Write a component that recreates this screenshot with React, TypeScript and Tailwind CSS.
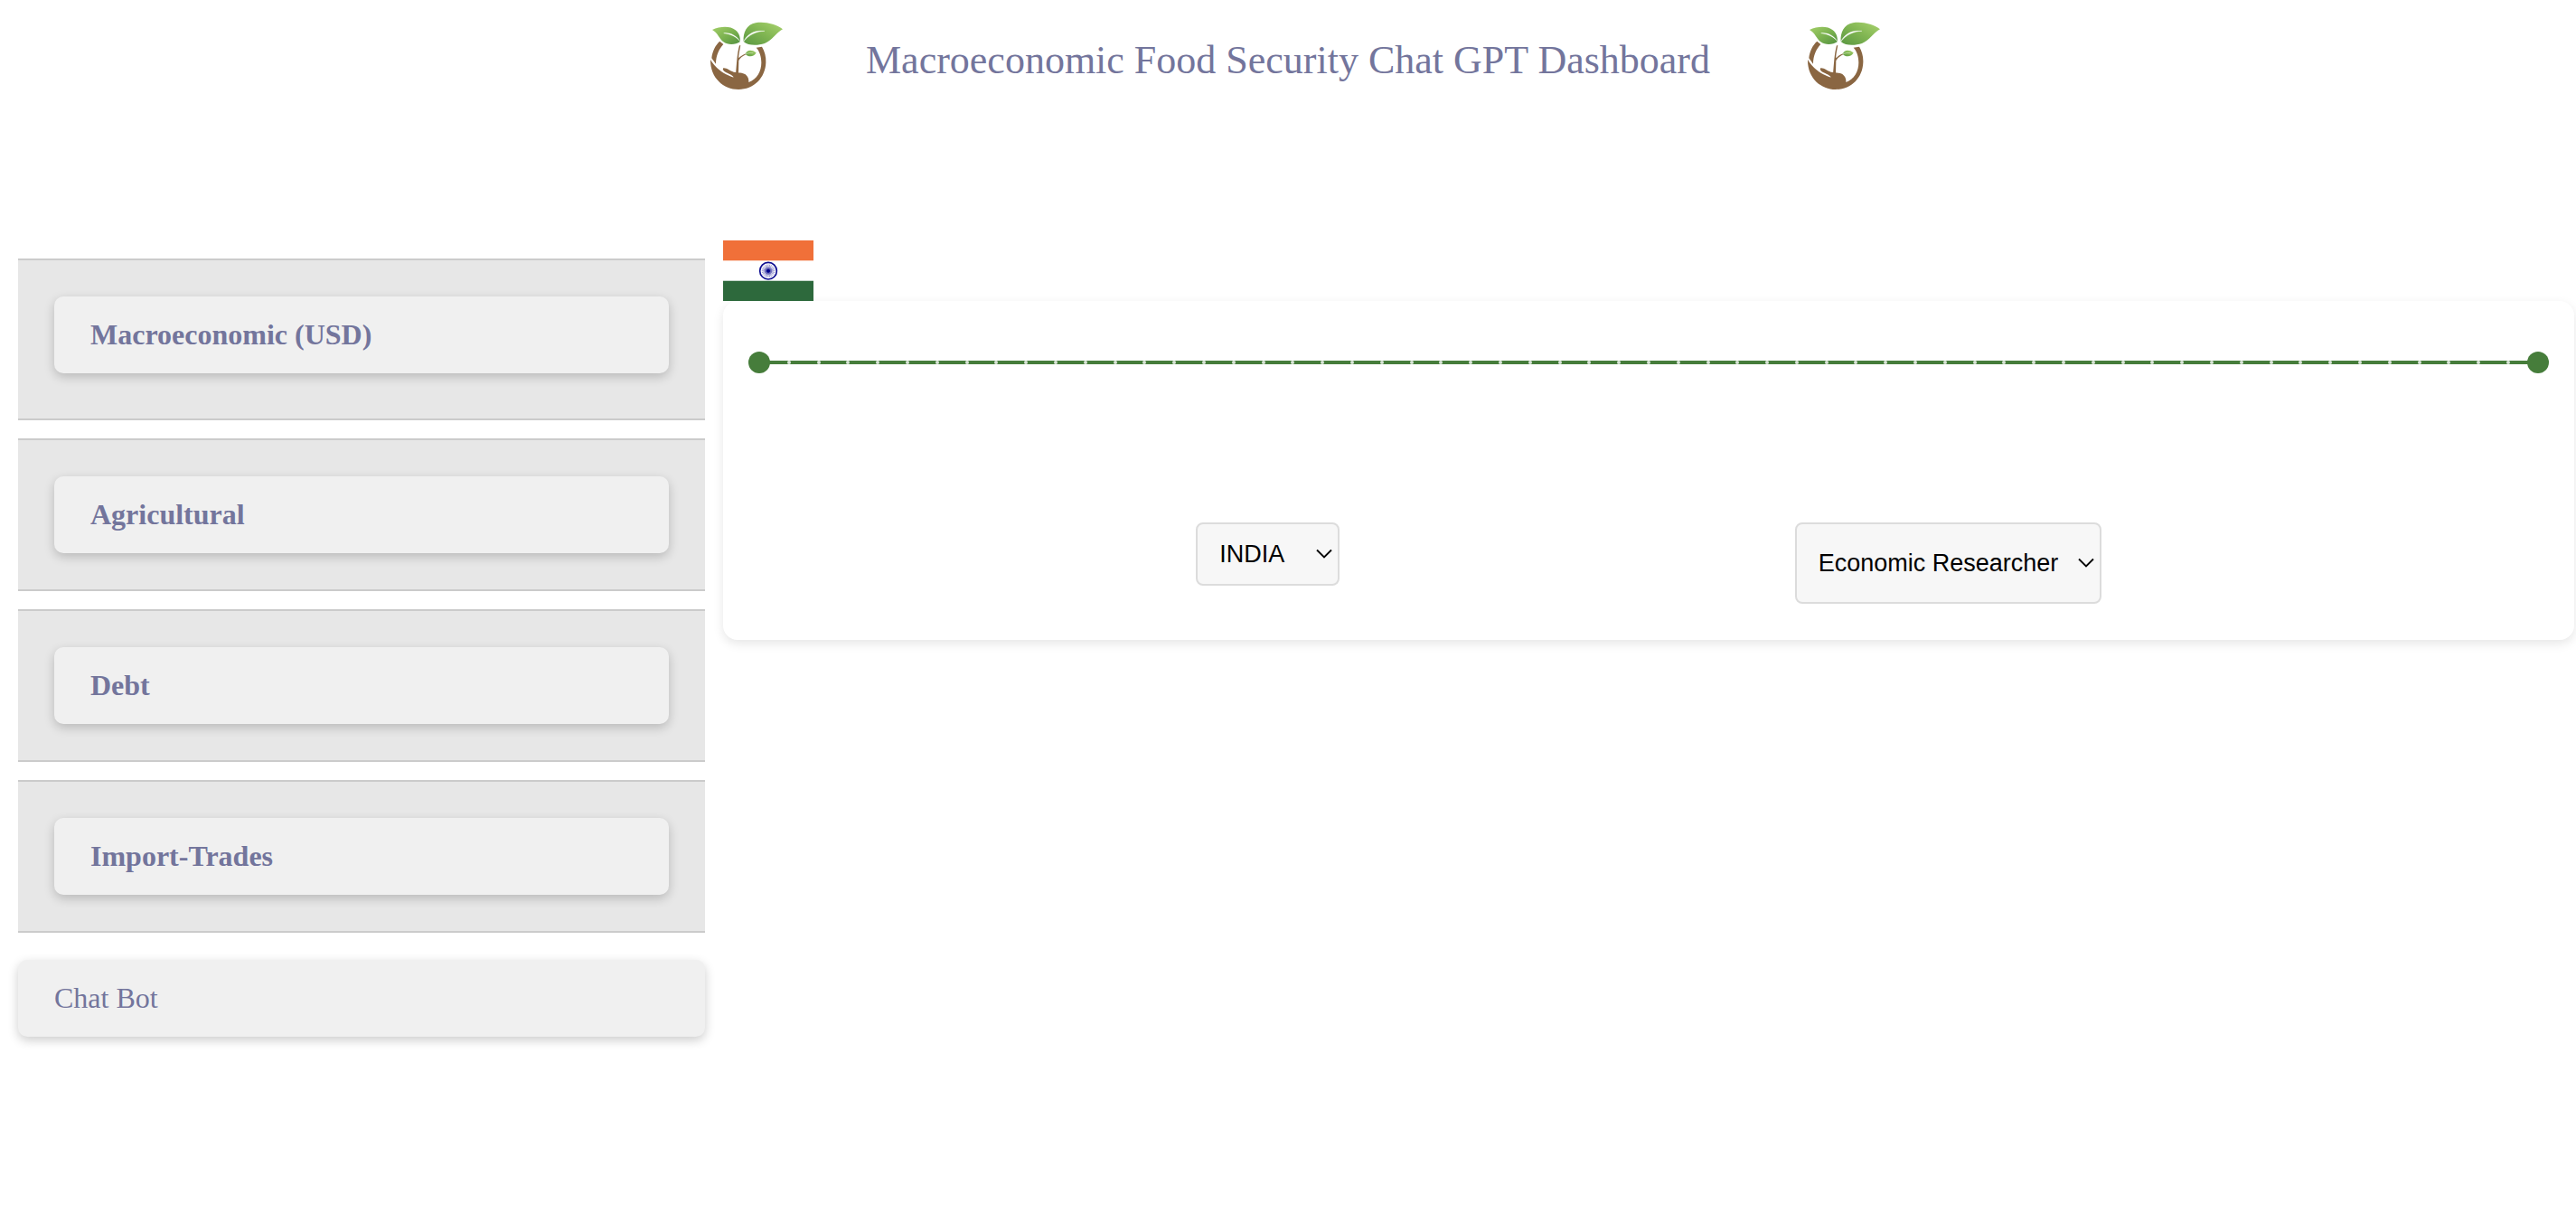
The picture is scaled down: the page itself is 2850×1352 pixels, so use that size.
import { useState } from "react";

const SECTIONS = ["Macroeconomic (USD)", "Agricultural", "Debt", "Import-Trades"];
const FIRST_YEAR = 1961;
const LAST_YEAR = 2021;
const YEARS = Array.from({ length: LAST_YEAR - FIRST_YEAR + 1 }, (_, i) => FIRST_YEAR + i);

function PlantLogo({ id }: { id: string }) {
  return (
    <svg viewBox="-6 6 300 300" className="size-[100px] shrink-0" aria-hidden="true">
      <defs>
        <linearGradient id={id} x1="0" y1="1" x2="1" y2="0">
          <stop offset="0" stopColor="#5a9742" />
          <stop offset="0.5" stopColor="#80b552" />
          <stop offset="1" stopColor="#aad36e" />
        </linearGradient>
        <linearGradient id={`${id}-left`} x1="0" y1="0" x2="1" y2="1">
          <stop offset="0" stopColor="#a3cf68" />
          <stop offset="0.55" stopColor="#78af4e" />
          <stop offset="1" stopColor="#529140" />
        </linearGradient>
      </defs>
      <path d="M79 107 L91 117 C77 132 66 154 66 182 L52 163 C54 142 63 121 79 107Z" fill="#8a6642" />
      <path
        d="M48 168 C58 186 78 205 100 217 C110 222 120 227 125 226 C121 219 107 214 99 210 C91 206 87 199 91 196 C103 195 112 205 125 209 C140 212 155 210 164 217 C173 224 176 234 175 243 C203 233 217 207 217 178 C217 158 211 140 200 128 L219 125 C228 140 233 158 232 178 C230 229 192 267 141 267 C92 267 47 229 48 168Z"
        fill="#8a6642"
      />
      <path d="M144 121 L148 121 C144 141 141 155 142 163 C148 157 156 151 166 148 L167 150 C156 155 146 163 142 171 L141 216 L132 216 C135 185 136 150 144 121Z" fill="#8a6642" />
      <path d="M164 149 C169 136 184 133 200 145 C194 158 175 162 164 149Z" fill={`url(#${id})`} />
      <path d="M165 149 Q177 144 190 146" fill="none" stroke="#e9f4d8" strokeWidth="1.5" />
      <path d="M54 69 C80 57 113 55 131 70 C144 80 147 94 147 108 C132 119 107 121 91 109 C77 99 73 79 54 69Z" fill={`url(#${id}-left)`} />
      <path d="M92 80 C115 78 134 88 147 108 C134 91 115 83 92 80Z" fill="#fff" stroke="#fff" strokeWidth="1" />
      <path d="M158 108 C156 79 168 51 198 46 C230 41 264 50 288 67 C265 80 253 105 228 114 C204 122 173 122 158 108Z" fill={`url(#${id})`} />
      <path d="M158 108 C170 83 195 69 228 73 C199 74 176 86 158 108Z" fill="#fff" stroke="#fff" strokeWidth="1" />
    </svg>
  );
}

function IndiaFlag() {
  const spokes = Array.from({ length: 12 }, (_, i) => i * 15);
  return (
    <svg viewBox="0 0 300 201" className="h-[67px] w-[100px]" role="img" aria-label="Flag of India">
      <rect width="300" height="201" fill="#fff" />
      <rect width="300" height="66" fill="#f07039" />
      <rect y="66" width="300" height="3" fill="#fbd5c4" />
      <rect y="132" width="300" height="3" fill="#c5d6cb" />
      <rect y="135" width="300" height="66" fill="#2d693c" />
      <circle cx="150" cy="101" r="28" fill="none" stroke="#0c0c90" strokeWidth="5" />
      {spokes.map((a) => (
        <line key={a} x1="128" x2="172" y1="101" y2="101" stroke="#1a1a96" strokeWidth="1.2" transform={`rotate(${a} 150 101)`} />
      ))}
      <circle cx="150" cy="101" r="12" fill="#1a1a96" fillOpacity="0.35" />
      <circle cx="150" cy="101" r="6" fill="#00008b" />
    </svg>
  );
}

function Chevron() {
  return (
    <svg viewBox="0 0 18 11" className="pointer-events-none absolute top-1/2 right-2 h-[11px] w-[18px] -translate-y-1/2" aria-hidden="true">
      <path d="M1 1 L9 9 L17 1" fill="none" stroke="#000" strokeWidth="1.8" />
    </svg>
  );
}

const SELECT =
  "appearance-none rounded-lg border-2 border-[#dcdcdc] bg-[#f7f7f7] pr-10 pl-6 font-['Liberation_Sans',Arial,sans-serif] text-[27px] leading-8 text-black";

const THUMB =
  "pointer-events-none absolute inset-0 h-6 w-full appearance-none bg-transparent [&::-webkit-slider-thumb]:pointer-events-auto [&::-webkit-slider-thumb]:size-6 [&::-webkit-slider-thumb]:appearance-none [&::-webkit-slider-thumb]:rounded-full [&::-webkit-slider-thumb]:bg-[#467d3b]";

function YearRange() {
  const [from, setFrom] = useState(FIRST_YEAR);
  const [to, setTo] = useState(LAST_YEAR);
  return (
    <div className="relative flex h-6 items-center px-3">
      <div className="flex h-1 w-full items-center bg-[#467d3b]">
        <div className="-mx-0.5 flex grow justify-between">
          {YEARS.map((year) => (
            <span key={year} className="size-1 rounded-full bg-[#dbe6d9]" />
          ))}
        </div>
      </div>
      <input type="range" aria-label="Start year" min={FIRST_YEAR} max={LAST_YEAR} value={from}
        onChange={(e) => setFrom(Math.min(Number(e.target.value), to))} className={THUMB} />
      <input type="range" aria-label="End year" min={FIRST_YEAR} max={LAST_YEAR} value={to}
        onChange={(e) => setTo(Math.max(Number(e.target.value), from))} className={THUMB} />
    </div>
  );
}

export default function App() {
  return (
    <div className="min-h-screen bg-white font-['Liberation_Serif','Times_New_Roman',serif] text-[#73759c]">
      <header className="flex items-center justify-center gap-[90px] pt-3">
        <PlantLogo id="leaf-a" />
        <h1 className="pt-2.5 text-[44px] leading-[50px]">Macroeconomic Food Security Chat GPT Dashboard</h1>
        <PlantLogo id="leaf-b" />
      </header>

      <div className="mt-[154px] flex items-start pr-0.5">
        <nav className="flex w-[800px] shrink-0 flex-col gap-5 p-5">
          {SECTIONS.map((label) => (
            <div key={label} className="border-y-2 border-[#cbcbcb] bg-[#e7e7e7] p-10 first:pb-[50px]">
              <button type="button" className="block h-[85px] w-full rounded-[10px] bg-[#f0f0f0] px-10 pb-0.5 text-left text-[32px] font-bold shadow-[0_4px_12px_rgba(0,0,0,0.2)]">
                {label}
              </button>
            </div>
          ))}
          <button type="button" className="mt-2.5 h-[85px] w-full rounded-[10px] bg-[#f0f0f0] px-10 pb-0.5 text-left text-[32px] shadow-[0_4px_12px_rgba(0,0,0,0.2)]">
            Chat Bot
          </button>
        </nav>

        <main className="grow">
          <IndiaFlag />
          <section className="rounded-2xl bg-white px-7 pt-14 pb-10 shadow-[0_4px_12px_rgba(0,0,0,0.1)]">
            <YearRange />
            <div className="mt-[165px] flex items-start justify-evenly gap-5 px-3">
              <div className="relative">
                <select aria-label="Country" className={`${SELECT} h-[70px] w-[159px]`}>
                  <option>INDIA</option>
                </select>
                <Chevron />
              </div>
              <div className="relative">
                <select aria-label="Role" className={`${SELECT} h-[90px] w-[339px]`}>
                  <option>Economic Researcher</option>
                </select>
                <Chevron />
              </div>
            </div>
          </section>
        </main>
      </div>
    </div>
  );
}
